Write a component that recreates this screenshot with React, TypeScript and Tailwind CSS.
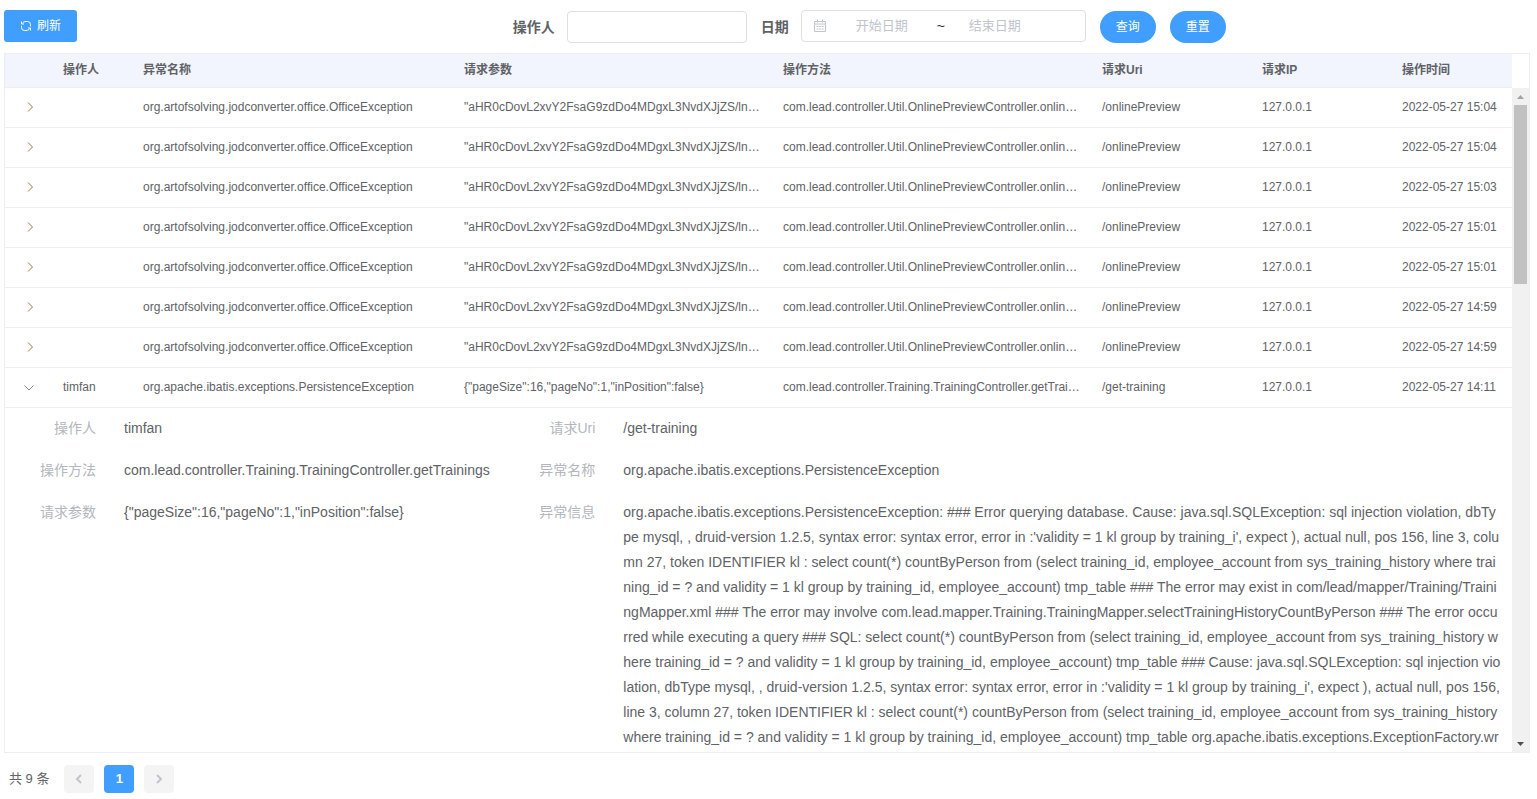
import React from "react";

type LogRow = {
  operator: string;
  name: string;
  params: string;
  method: string;
  uri: string;
  ip: string;
  time: string;
  open?: boolean;
};

const office = (time: string): LogRow => ({
  operator: "",
  name: "org.artofsolving.jodconverter.office.OfficeException",
  params: '"aHR0cDovL2xvY2FsaG9zdDo4MDgxL3NvdXJjZS/lnKjnur8="',
  method: "com.lead.controller.Util.OnlinePreviewController.onlinePreview",
  uri: "/onlinePreview",
  ip: "127.0.0.1",
  time,
});

const rows: LogRow[] = [
  office("2022-05-27 15:04"),
  office("2022-05-27 15:04"),
  office("2022-05-27 15:03"),
  office("2022-05-27 15:01"),
  office("2022-05-27 15:01"),
  office("2022-05-27 14:59"),
  office("2022-05-27 14:59"),
  {
    operator: "timfan",
    name: "org.apache.ibatis.exceptions.PersistenceException",
    params: '{"pageSize":16,"pageNo":1,"inPosition":false}',
    method: "com.lead.controller.Training.TrainingController.getTrainings",
    uri: "/get-training",
    ip: "127.0.0.1",
    time: "2022-05-27 14:11",
    open: true,
  },
];

const message =
  "org.apache.ibatis.exceptions.PersistenceException: ### Error querying database. Cause: java.sql.SQLException: sql injection violation, dbType mysql, , druid-version 1.2.5, syntax error: syntax error, error in :'validity = 1 kl group by training_i', expect ), actual null, pos 156, line 3, column 27, token IDENTIFIER kl : select count(*) countByPerson from (select training_id, employee_account from sys_training_history where training_id = ? and validity = 1 kl group by training_id, employee_account) tmp_table ### The error may exist in com/lead/mapper/Training/TrainingMapper.xml ### The error may involve com.lead.mapper.Training.TrainingMapper.selectTrainingHistoryCountByPerson ### The error occurred while executing a query ### SQL: select count(*) countByPerson from (select training_id, employee_account from sys_training_history where training_id = ? and validity = 1 kl group by training_id, employee_account) tmp_table ### Cause: java.sql.SQLException: sql injection violation, dbType mysql, , druid-version 1.2.5, syntax error: syntax error, error in :'validity = 1 kl group by training_i', expect ), actual null, pos 156, line 3, column 27, token IDENTIFIER kl : select count(*) countByPerson from (select training_id, employee_account from sys_training_history where training_id = ? and validity = 1 kl group by training_id, employee_account) tmp_table org.apache.ibatis.exceptions.ExceptionFactory.wr";

const headers = ["", "操作人", "异常名称", "请求参数", "操作方法", "请求Uri", "请求IP", "操作时间"];

function RefreshIcon() {
  return (
    <svg className="size-3" viewBox="0 0 12 12" fill="none" stroke="currentColor" strokeWidth="1">
      <path d="M1.500 1.500v2.500H4M2 3.600C3 2.200 4.500 1.500 6 1.500h1.500a3 3 0 0 1 3 3v1.800" />
      <path d="M10.500 10.500V8H8M10 8.400C9 9.800 7.500 10.500 6 10.500H4.500a3 3 0 0 1-3-3V5.700" />
    </svg>
  );
}

function CalendarIcon() {
  return (
    <svg className="size-[14px] shrink-0 text-[#c0c4cc]" viewBox="0 0 14 14" fill="none" stroke="currentColor">
      <path d="M1.500 2.500h11v10h-11zM1.500 5h11M4.500 .5v3M9.500 .5v3" />
      <path d="M3.500 7.500h2M6.200 7.500h1.800M8.700 7.500h2M3.500 10h2M6.200 10h1.800M8.700 10h2" />
    </svg>
  );
}

function Chevron({ d, className }: { d: string; className: string }) {
  return (
    <svg className={className} viewBox="0 0 12 12" fill="none" stroke="currentColor">
      <path d={d} />
    </svg>
  );
}

function Detail({ label, children }: { label: string; children: React.ReactNode }) {
  return (
    <div className="flex">
      <dt className="w-20 shrink-0 text-right text-[#b3b6bd]">{label}</dt>
      <dd className="ml-7 min-w-0 flex-1 break-all">{children}</dd>
    </div>
  );
}

function Row({ row }: { row: LogRow }) {
  const cell = "truncate px-[10px]";
  return (
    <>
      <tr className="h-10 border-b border-[#ebeef5]">
        <td>
          <button type="button" aria-label="展开" aria-expanded={!!row.open} className="ml-[18px] block size-3">
            {row.open ? (
              <Chevron className="size-3 text-[#888]" d="M1.500 4.500 6 9l4.500-4.500" />
            ) : (
              <Chevron className="size-3 text-[#96784a]" d="M5 1.500 9.500 6 5 10.500" />
            )}
          </button>
        </td>
        <td className={cell}>{row.operator}</td>
        <td className={cell}>{row.name}</td>
        <td className={cell}>{row.params}</td>
        <td className={cell}>{row.method}</td>
        <td className={cell}>{row.uri}</td>
        <td className={cell}>{row.ip}</td>
        <td className={cell}>{row.time}</td>
      </tr>
      {row.open && (
        <tr>
          <td colSpan={8} className="py-2 pr-[10px] pl-[11px]">
            <dl className="flex text-sm leading-[25px]">
              <div className="flex w-1/3 shrink-0 flex-col gap-[17px]">
                <Detail label="操作人">{row.operator}</Detail>
                <Detail label="操作方法">{row.method}</Detail>
                <Detail label="请求参数">{row.params}</Detail>
              </div>
              <div className="flex min-w-0 flex-1 flex-col gap-[17px] pl-1">
                <Detail label="请求Uri">{row.uri}</Detail>
                <Detail label="异常名称">{row.name}</Detail>
                <Detail label="异常信息">{message}</Detail>
              </div>
            </dl>
          </td>
        </tr>
      )}
    </>
  );
}

export default function App() {
  return (
    <main className="flex h-screen flex-col bg-white pr-[7px] pl-1 font-['Liberation_Sans','Noto_Sans_CJK_SC',sans-serif] text-xs text-[#606266]">
      <header className="flex h-[53px] shrink-0 items-start pt-[10px]">
        <div className="w-1/3 shrink-0">
          <button type="button" className="flex h-8 items-center gap-[5px] rounded-[3px] bg-[#409eff] px-4 text-white">
            <RefreshIcon />
            刷新
          </button>
        </div>
        <form className="flex items-end text-sm">
          <label htmlFor="operator" className="pr-3 font-bold leading-8">操作人</label>
          <input id="operator" className="mt-px mr-[14px] h-8 w-[180px] rounded border border-[#dcdfe6] px-[15px]" />
          <label htmlFor="start" className="pr-3 font-bold leading-8">日期</label>
          <div className="mr-[14px] flex h-8 w-[285px] items-center self-start rounded border border-[#dcdfe6] px-[11px] text-[13px]">
            <CalendarIcon />
            <input id="start" placeholder="开始日期" className="w-[110px] text-center placeholder:text-[#c0c4cc]" />
            <span className="text-sm text-[#303133]">~</span>
            <input aria-label="结束日期" placeholder="结束日期" className="w-[100px] text-center placeholder:text-[#c0c4cc]" />
          </div>
          <button type="button" className="mr-[14px] h-8 rounded-full bg-[#409eff] px-4 text-xs text-white">查询</button>
          <button type="button" className="h-8 rounded-full bg-[#409eff] px-4 text-xs text-white">重置</button>
        </form>
      </header>

      <section className="flex min-h-0 flex-1 overflow-hidden border border-[#ebeef5]">
        <div className="min-w-0 flex-1 overflow-hidden">
          <table className="w-full table-fixed border-collapse">
            <colgroup>
              <col className="w-12" />
              <col className="w-20" />
              <col className="w-[21.3%]" />
              <col />
              <col />
              <col className="w-40" />
              <col className="w-[140px]" />
              <col className="w-[120px]" />
            </colgroup>
            <thead>
              <tr className="h-[33px] border-b border-[#ebeef5] bg-[#f2f5fd] text-left">
                {headers.map((h, i) => (
                  <th key={i} className="px-[10px] font-bold">{h}</th>
                ))}
              </tr>
            </thead>
            <tbody>
              {rows.map((r, i) => (
                <Row key={i} row={r} />
              ))}
            </tbody>
          </table>
        </div>
        <div className="mt-[34px] flex w-[17px] shrink-0 flex-col items-center justify-between bg-[#f1f1f1]" aria-hidden="true">
          <div className="flex flex-col items-center">
            <svg className="h-[17px] w-[17px] text-[#a3a3a3]" viewBox="0 0 17 17" fill="currentColor">
              <path d="M8.500 7 12 11H5z" />
            </svg>
            <div className="h-[179px] w-[13px] bg-[#c1c1c1]" />
          </div>
          <svg className="h-[17px] w-[17px] text-[#505050]" viewBox="0 0 17 17" fill="currentColor">
            <path d="M5 7h7l-3.500 4z" />
          </svg>
        </div>
      </section>

      <nav className="flex h-[46px] shrink-0 items-center pt-[6px] pl-[5px] text-[13px]" aria-label="分页">
        <span className="mr-[15px]">共 9 条</span>
        <button type="button" disabled aria-label="上一页" className="mr-[10px] flex h-7 w-[30px] items-center justify-center rounded-sm bg-[#f4f4f5] text-[#c0c4cc]">
          <Chevron className="size-3 stroke-2" d="M8 2 4 6l4 4" />
        </button>
        <button type="button" className="mr-[10px] h-7 w-[30px] rounded-sm bg-[#409eff] font-bold text-white">1</button>
        <button type="button" disabled aria-label="下一页" className="flex h-7 w-[30px] items-center justify-center rounded-sm bg-[#f4f4f5] text-[#c0c4cc]">
          <Chevron className="size-3 stroke-2" d="m4 2 4 4-4 4" />
        </button>
      </nav>
    </main>
  );
}
